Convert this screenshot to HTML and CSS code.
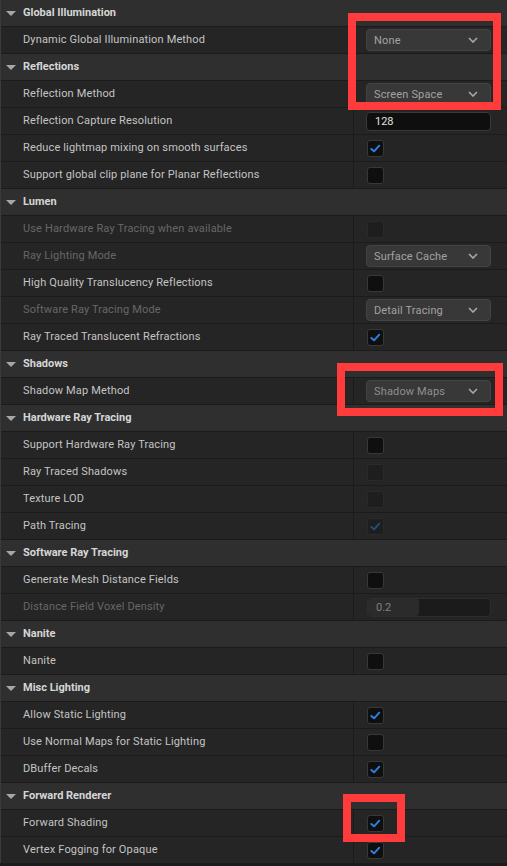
FILE: index.html
```html
<!DOCTYPE html>
<html>
<head>
<meta charset="utf-8">
<link rel="stylesheet" href="styles.css">
</head>
<body>
<div class="panel">
  <div class="row head"><span class="tri"></span><span class="htext">Global Illumination</span></div>
  <div class="row"><div class="name">Dynamic Global Illumination Method</div><div class="val"><div class="combo"><span>None</span><svg class="chev" viewBox="0 0 10 6"><path d="M1 1 L5 5 L9 1"/></svg></div></div></div>
  <div class="row head"><span class="tri"></span><span class="htext">Reflections</span></div>
  <div class="row"><div class="name">Reflection Method</div><div class="val"><div class="combo"><span>Screen Space</span><svg class="chev" viewBox="0 0 10 6"><path d="M1 1 L5 5 L9 1"/></svg></div></div></div>
  <div class="row"><div class="name">Reflection Capture Resolution</div><div class="val"><div class="field">128</div></div></div>
  <div class="row"><div class="name">Reduce lightmap mixing on smooth surfaces</div><div class="val"><div class="cb"><svg viewBox="0 0 16 16"><path d="M3.5 8.5 L6.5 11 L12 5"/></svg></div></div></div>
  <div class="row"><div class="name">Support global clip plane for Planar Reflections</div><div class="val"><div class="cb"></div></div></div>
  <div class="row head"><span class="tri"></span><span class="htext">Lumen</span></div>
  <div class="row"><div class="name dis">Use Hardware Ray Tracing when available</div><div class="val"><div class="cb off"></div></div></div>
  <div class="row"><div class="name dis">Ray Lighting Mode</div><div class="val"><div class="combo"><span>Surface Cache</span><svg class="chev" viewBox="0 0 10 6"><path d="M1 1 L5 5 L9 1"/></svg></div></div></div>
  <div class="row"><div class="name">High Quality Translucency Reflections</div><div class="val"><div class="cb"></div></div></div>
  <div class="row"><div class="name dis">Software Ray Tracing Mode</div><div class="val"><div class="combo"><span>Detail Tracing</span><svg class="chev" viewBox="0 0 10 6"><path d="M1 1 L5 5 L9 1"/></svg></div></div></div>
  <div class="row"><div class="name">Ray Traced Translucent Refractions</div><div class="val"><div class="cb"><svg viewBox="0 0 16 16"><path d="M3.5 8.5 L6.5 11 L12 5"/></svg></div></div></div>
  <div class="row head"><span class="tri"></span><span class="htext">Shadows</span></div>
  <div class="row"><div class="name">Shadow Map Method</div><div class="val"><div class="combo dim"><span>Shadow Maps</span><svg class="chev" viewBox="0 0 10 6"><path d="M1 1 L5 5 L9 1"/></svg></div></div></div>
  <div class="row head"><span class="tri"></span><span class="htext">Hardware Ray Tracing</span></div>
  <div class="row"><div class="name">Support Hardware Ray Tracing</div><div class="val"><div class="cb"></div></div></div>
  <div class="row"><div class="name">Ray Traced Shadows</div><div class="val"><div class="cb off"></div></div></div>
  <div class="row"><div class="name">Texture LOD</div><div class="val"><div class="cb off"></div></div></div>
  <div class="row"><div class="name">Path Tracing</div><div class="val"><div class="cb off"><svg viewBox="0 0 16 16"><path d="M3.5 8.5 L6.5 11 L12 5"/></svg></div></div></div>
  <div class="row head"><span class="tri"></span><span class="htext">Software Ray Tracing</span></div>
  <div class="row"><div class="name">Generate Mesh Distance Fields</div><div class="val"><div class="cb"></div></div></div>
  <div class="row"><div class="name dis">Distance Field Voxel Density</div><div class="val"><div class="slider"><div class="fill"></div><span class="stext">0.2</span></div></div></div>
  <div class="row head"><span class="tri"></span><span class="htext">Nanite</span></div>
  <div class="row"><div class="name">Nanite</div><div class="val"><div class="cb"></div></div></div>
  <div class="row head"><span class="tri"></span><span class="htext">Misc Lighting</span></div>
  <div class="row"><div class="name">Allow Static Lighting</div><div class="val"><div class="cb"><svg viewBox="0 0 16 16"><path d="M3.5 8.5 L6.5 11 L12 5"/></svg></div></div></div>
  <div class="row"><div class="name">Use Normal Maps for Static Lighting</div><div class="val"><div class="cb"></div></div></div>
  <div class="row"><div class="name">DBuffer Decals</div><div class="val"><div class="cb"><svg viewBox="0 0 16 16"><path d="M3.5 8.5 L6.5 11 L12 5"/></svg></div></div></div>
  <div class="row head"><span class="tri"></span><span class="htext">Forward Renderer</span></div>
  <div class="row"><div class="name">Forward Shading</div><div class="val"><div class="cb"><svg viewBox="0 0 16 16"><path d="M3.5 8.5 L6.5 11 L12 5"/></svg></div></div></div>
  <div class="row"><div class="name">Vertex Fogging for Opaque</div><div class="val"><div class="cb"><svg viewBox="0 0 16 16"><path d="M3.5 8.5 L6.5 11 L12 5"/></svg></div></div></div>

  <div class="mark m1"></div>
  <div class="mark m2"></div>
  <div class="mark m3"></div>
</div>
</body>
</html>
```
FILE: styles.css
```css
html, body {
  margin: 0;
  padding: 0;
  background: #1b1b1b;
}
body {
  font-family: Roboto, "Liberation Sans", sans-serif;
  font-size: 11px;
  color: #c4c4c4;
  width: 507px;
  height: 866px;
  overflow: hidden;
}
.panel {
  position: relative;
  display: flex;
  flex-direction: column;
  gap: 1px;
  border-left: 1px solid #3a3a3a;
}
.row {
  height: 26px;
  display: flex;
  align-items: stretch;
  background: #252525;
}
.row.head {
  background: #2f2f2f;
  align-items: center;
}
.tri {
  width: 0;
  height: 0;
  margin-left: 5px;
  border-left: 5px solid transparent;
  border-right: 5px solid transparent;
  border-top: 5px solid #a6a6a6;
}
.htext {
  margin-left: 7px;
  margin-bottom: 2px;
  font-weight: bold;
  color: #d6d6d6;
}
.name {
  width: 330px;
  padding-left: 22px;
  padding-bottom: 2px;
  box-sizing: content-box;
  display: flex;
  align-items: center;
  border-right: 1px solid #1b1b1b;
  white-space: nowrap;
  letter-spacing: 0.15px;
}
.name.dis {
  color: #676767;
}
.val {
  flex: 1;
  display: flex;
  align-items: center;
  padding-left: 12px;
}
.combo {
  box-sizing: border-box;
  width: 125px;
  height: 22px;
  border: 1px solid #444444;
  border-radius: 4px;
  background: #383838;
  display: flex;
  align-items: center;
  justify-content: space-between;
  padding: 0 12px 0 7px;
  color: #a2a2a2;
  letter-spacing: 0.15px;
}
.combo.dim {
  color: #8f8f8f;
}
.chev {
  width: 10px;
  height: 6px;
}
.chev path {
  fill: none;
  stroke: #a8a8a8;
  stroke-width: 1.6;
}
.field {
  box-sizing: border-box;
  width: 125px;
  height: 19px;
  background: #0f0f0f;
  border: 1px solid #393939;
  border-radius: 4px;
  padding-left: 8px;
  display: flex;
  align-items: center;
  color: #e0e0e0;
}
.cb {
  box-sizing: border-box;
  width: 17px;
  height: 17px;
  margin-left: 1px;
  background: #0f0f0f;
  border: 1px solid #383838;
  border-radius: 3px;
  display: flex;
  align-items: center;
  justify-content: center;
}
.cb svg {
  width: 15px;
  height: 15px;
}
.cb path {
  fill: none;
  stroke: #2a84e6;
  stroke-width: 2;
  stroke-linecap: round;
  stroke-linejoin: round;
}
.cb.off {
  background: #1e1e1e;
  border-color: #2a2a2a;
}
.cb.off path {
  stroke: #1e4f80;
}
.slider {
  position: relative;
  box-sizing: border-box;
  width: 124px;
  height: 19px;
  margin-left: 1px;
  background: #1b1b1b;
  border: 1px solid #2d2d2d;
  border-radius: 4px;
  display: flex;
  align-items: center;
  overflow: hidden;
}
.fill {
  position: absolute;
  left: 0;
  top: 0;
  bottom: 0;
  width: 51px;
  background: #2b2b2b;
  border-radius: 3px;
}
.stext {
  position: relative;
  margin-left: 8px;
  color: #808080;
}
.mark {
  position: absolute;
  box-sizing: border-box;
  border: 8px solid #ff3b3b;
}
.m1 { left: 347px; top: 13px; width: 153px; height: 97px; }
.m2 { left: 336px; top: 363px; width: 166px; height: 53px; }
.m3 { left: 342px; top: 794px; width: 62px; height: 48px; }
```
